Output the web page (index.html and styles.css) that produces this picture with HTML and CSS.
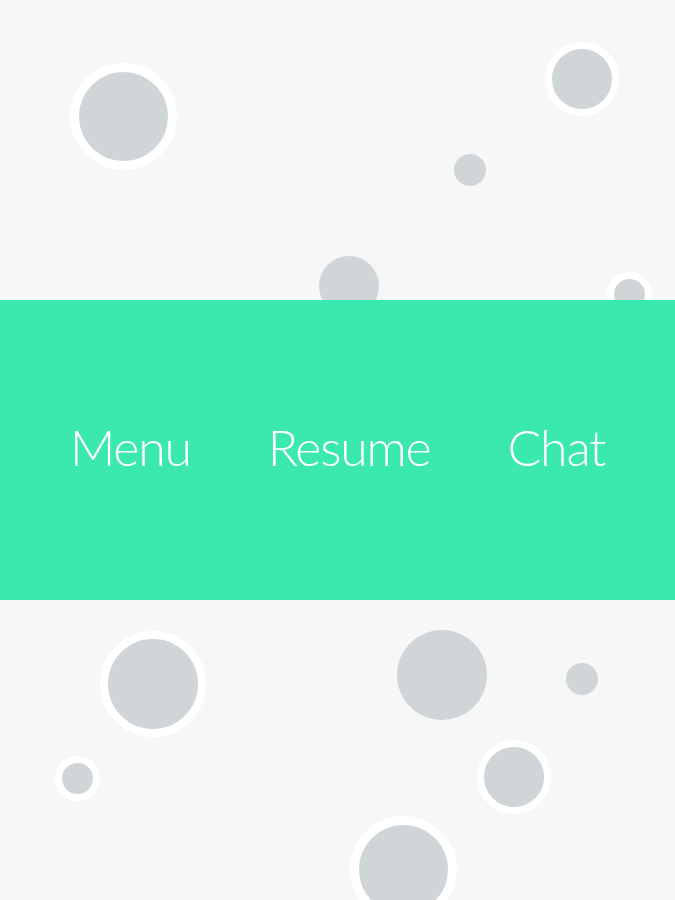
FILE: index.html
```html
<!DOCTYPE html>
<html lang="en">
<head>
<meta charset="utf-8">
<title>Home</title>
<link rel="stylesheet" href="styles.css">
</head>
<body>
<div class="page">
  <section class="field field-top">
    <span class="dot ringed c1"></span>
    <span class="dot ringed c2"></span>
    <span class="dot c3"></span>
    <span class="dot c4"></span>
    <span class="dot ringed c5"></span>
  </section>
  <nav class="band">
    <a class="link" href="#">Menu</a>
    <a class="link" href="#">Resume</a>
    <a class="link" href="#">Chat</a>
  </nav>
  <section class="field field-bottom">
    <span class="dot ringed c6"></span>
    <span class="dot c7"></span>
    <span class="dot c8"></span>
    <span class="dot ringed c9"></span>
    <span class="dot ringed c10"></span>
    <span class="dot ringed c11"></span>
  </section>
</div>
</body>
</html>
```
FILE: styles.css
```css
html, body {
  margin: 0;
  padding: 0;
  background: #f7f7f7;
}
.page {
  width: 675px;
  height: 900px;
  overflow: hidden;
  display: flex;
  flex-direction: column;
  font-family: Lato, "Open Sans", sans-serif;
}
.field {
  position: relative;
  height: 300px;
  flex: none;
}
.band {
  position: relative;
  z-index: 2;
  height: 300px;
  flex: none;
  background: #3ae8b0;
  display: flex;
  justify-content: center;
  align-items: center;
  gap: 77px;
  padding-bottom: 6px;
  box-sizing: border-box;
}
.link {
  color: #ffffff;
  text-decoration: none;
  font-size: 50px;
  font-weight: 300;
  letter-spacing: -1.2px;
  line-height: 1;
}
.dot {
  position: absolute;
  display: block;
  border-radius: 50%;
  background: #d0d5d8;
}
.ringed {
  border-style: solid;
  border-color: #ffffff;
}
.c1 { left: 70px; top: 63px; width: 89px; height: 89px; border-width: 9px; }
.c2 { left: 545px; top: 42px; width: 60px; height: 60px; border-width: 7.5px; }
.c3 { left: 454px; top: 154px; width: 32px; height: 32px; }
.c4 { left: 319px; top: 256px; width: 60px; height: 60px; }
.c5 { left: 607px; top: 272px; width: 31px; height: 31px; border-width: 7px; }
.c6 { left: 100px; top: 31px; width: 90px; height: 90px; border-width: 8px; }
.c7 { left: 397px; top: 30px; width: 90px; height: 90px; }
.c8 { left: 566px; top: 63px; width: 32px; height: 32px; }
.c9 { left: 55px; top: 156px; width: 31px; height: 31px; border-width: 7px; }
.c10 { left: 477px; top: 140px; width: 60px; height: 60px; border-width: 7px; }
.c11 { left: 350px; top: 216px; width: 89px; height: 89px; border-width: 9px; }
```
